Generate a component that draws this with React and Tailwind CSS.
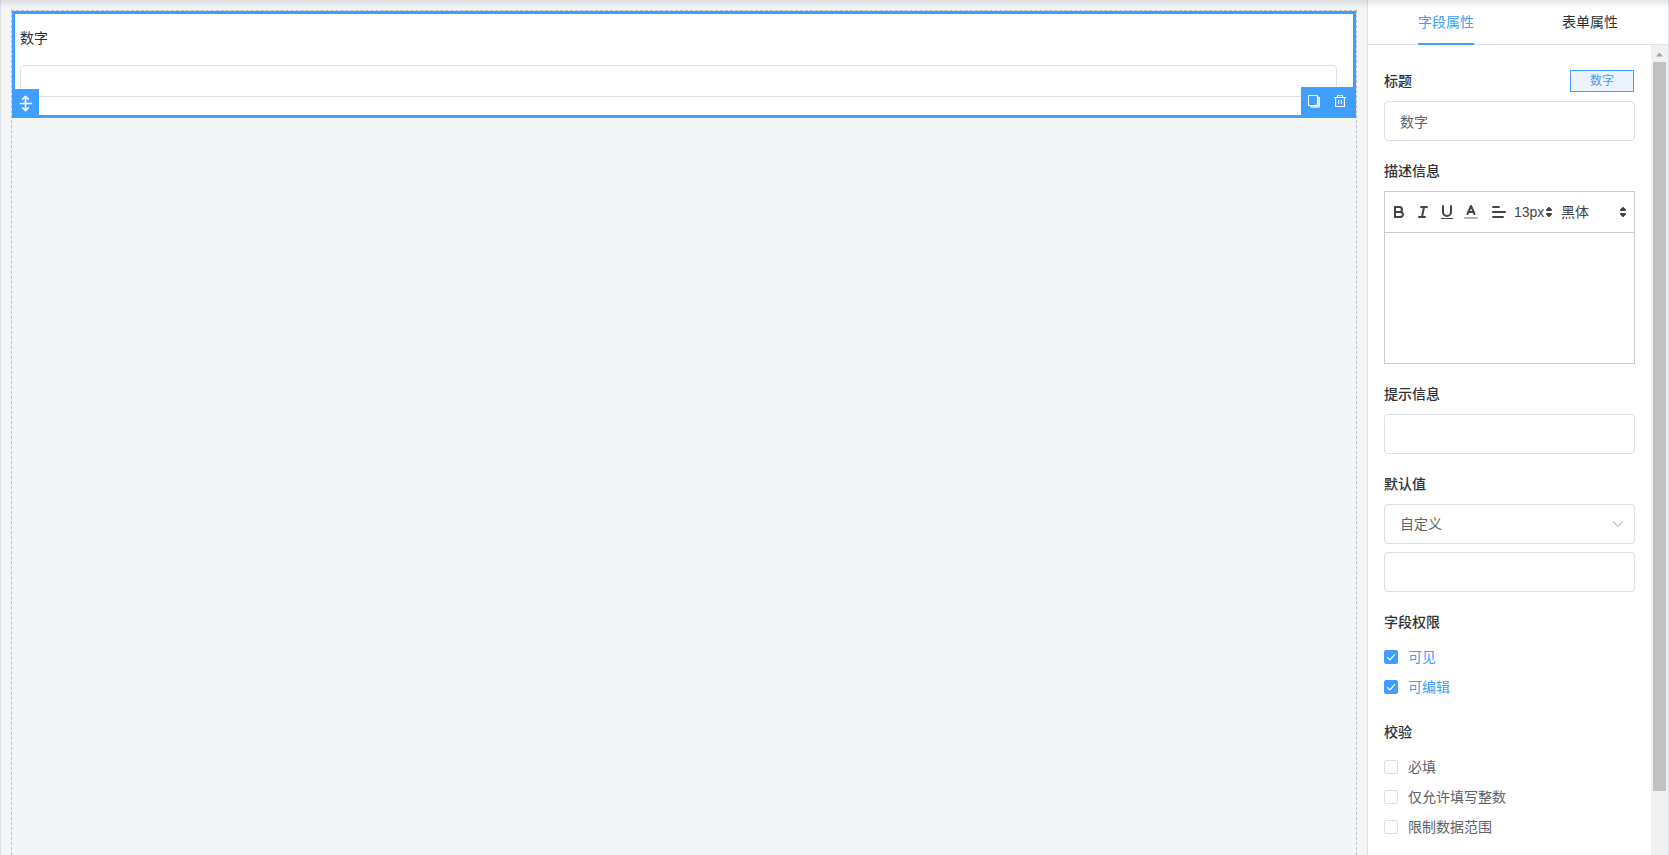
import { useState } from "react";

function Svg({ size = 18, box = 18, className = "", children }) {
  return (
    <svg
      width={size}
      height={size}
      viewBox={`0 0 ${box} ${box}`}
      fill="none"
      stroke="currentColor"
      aria-hidden="true"
      className={className}
    >
      {children}
    </svg>
  );
}

const BoldIcon = () => (
  <Svg>
    <g strokeWidth="2" strokeLinejoin="round">
      <path d="M5,4H9.5A2.5,2.5,0,0,1,12,6.5v0A2.5,2.5,0,0,1,9.5,9H5V4Z" />
      <path d="M5,9h5.5A2.5,2.5,0,0,1,13,11.5v0A2.5,2.5,0,0,1,10.5,14H5V9Z" />
    </g>
  </Svg>
);

const ItalicIcon = () => (
  <Svg>
    <g strokeWidth="2" strokeLinecap="round">
      <line x1="7" x2="13" y1="4" y2="4" />
      <line x1="5" x2="11" y1="14" y2="14" />
      <line x1="8" x2="10" y1="14" y2="4" />
    </g>
  </Svg>
);

const UnderlineIcon = () => (
  <Svg>
    <path
      strokeWidth="2"
      strokeLinecap="round"
      d="M5,3V9a4.012,4.012,0,0,0,4,4H9a4.012,4.012,0,0,0,4-4V3"
    />
    <rect x="3" y="15" width="12" height="1" fill="currentColor" stroke="none" />
  </Svg>
);

const ColorIcon = () => (
  <Svg>
    <line x1="3" x2="15" y1="15" y2="15" strokeWidth="2" strokeLinecap="round" opacity="0.4" />
    <g strokeWidth="2" strokeLinecap="round" strokeLinejoin="round">
      <polyline points="5.5 11 9 3 12.5 11" />
      <line x1="11.63" x2="6.38" y1="9" y2="9" />
    </g>
  </Svg>
);

const AlignIcon = () => (
  <Svg>
    <g strokeWidth="2" strokeLinecap="round">
      <line x1="3" x2="15" y1="9" y2="9" />
      <line x1="3" x2="13" y1="14" y2="14" />
      <line x1="3" x2="9" y1="4" y2="4" />
    </g>
  </Svg>
);

const PickerArrows = () => (
  <Svg className="pointer-events-none absolute right-0 top-1">
    <g strokeWidth="2" strokeLinecap="round" strokeLinejoin="round" fill="currentColor">
      <polygon points="7 11 9 13 11 11 7 11" />
      <polygon points="7 7 9 5 11 7 7 7" />
    </g>
  </Svg>
);

function ToolButton({ label, children }) {
  return (
    <button type="button" aria-label={label} className="flex size-6 items-center justify-center">
      {children}
    </button>
  );
}

function Picker({ label, options, className }) {
  return (
    <div className={`relative h-[26px] ${className}`}>
      <select
        aria-label={label}
        className="h-full w-full appearance-none bg-transparent p-0 text-sm outline-none"
      >
        {options.map((o) => (
          <option key={o}>{o}</option>
        ))}
      </select>
      <PickerArrows />
    </div>
  );
}

const titleClass = "text-sm leading-5 font-medium text-[#303133]";

function Section({ title, htmlFor, extra, children }) {
  return (
    <section className="flex flex-col gap-2.5">
      <div className="flex h-5 items-center justify-between">
        {htmlFor ? (
          <label htmlFor={htmlFor} className={titleClass}>
            {title}
          </label>
        ) : (
          <h3 className={titleClass}>{title}</h3>
        )}
        {extra}
      </div>
      {children}
    </section>
  );
}

const inputClass =
  "h-10 w-full rounded border border-[#dcdfe6] bg-white px-[15px] text-sm text-[#606266] outline-none";

function Check({ label, initial = false }) {
  const [on, setOn] = useState(initial);
  return (
    <label className="flex h-[30px] items-center gap-2.5 text-sm text-[#606266] has-checked:text-[#409eff]">
      <span className="grid size-3.5 shrink-0 place-items-center">
        <input
          type="checkbox"
          checked={on}
          onChange={() => setOn(!on)}
          className="col-start-1 row-start-1 size-3.5 appearance-none rounded-xs border border-[#dcdfe6] bg-white checked:border-[#409eff] checked:bg-[#409eff]"
        />
        {on && (
          <Svg size={14} box={14} className="pointer-events-none col-start-1 row-start-1 text-white">
            <path d="M3.2 7.3 L5.9 9.9 L10.9 4.4" strokeWidth="1.2" />
          </Svg>
        )}
      </span>
      {label}
    </label>
  );
}

function Canvas() {
  return (
    <main className="flex min-w-0 flex-1 flex-col border-l border-[#dcdfe6] bg-[#f3f5f7] px-2.5 pt-2.5">
      <div className="flex-1 border border-b-0 border-dashed border-[#bbbfc6]">
        <div className="relative h-[107px] border-[3px] border-[#409eff] bg-white pt-3.5 pr-4 pl-[5px]">
          <label htmlFor="number-field" className="block text-sm leading-5 text-[#303133]">
            数字
          </label>
          <input
            id="number-field"
            type="text"
            className="mt-[17px] block h-8 w-full rounded border border-[#dcdfe6] bg-white px-[15px] text-sm outline-none"
          />
          <button
            type="button"
            aria-label="移动"
            className="absolute -bottom-[3px] -left-[3px] flex h-[29px] w-[27px] items-center justify-center bg-[#409eff] text-white"
          >
            <Svg size={17} box={17}>
              <path
                d="M2.5 8.5H15M8.5 1.5V15.5M5.2 4.6L8.5 1.3L11.8 4.6M5.2 12.4L8.5 15.7L11.8 12.4"
                strokeWidth="1.6"
              />
            </Svg>
          </button>
          <div className="absolute -right-[3px] -bottom-[3px] flex h-[31px] w-[55px] gap-3 bg-[#409eff] pt-[7px] pl-1.5 text-white">
            <button type="button" aria-label="复制" className="size-3.5">
              <Svg size={14} box={14}>
                <rect x="1.5" y="1.5" width="9" height="10" rx="0.5" strokeWidth="1.1" />
                <path d="M12.5 3V13.2H3.5M11.6 2.6V12.3H3" strokeWidth="0.9" />
              </Svg>
            </button>
            <button type="button" aria-label="删除" className="size-3.5">
              <Svg size={14} box={14}>
                <path
                  d="M1 3.5H13M4.5 3.3V1.5H9.5V3.3M2.6 3.5V12.5H11.4V3.5M5.6 6V10M8.4 6V10"
                  strokeWidth="1.1"
                  strokeLinejoin="round"
                />
              </Svg>
            </button>
          </div>
        </div>
      </div>
    </main>
  );
}

function Scrollbar() {
  return (
    <div aria-hidden="true" className="flex w-[17px] shrink-0 flex-col items-center bg-[#f1f1f1]">
      <div className="flex h-[17px] items-center">
        <Svg size={7} box={7} className="mt-0.5">
          <path d="M0 5.5H7L3.5 1.5Z" fill="#a3a3a3" stroke="none" />
        </Svg>
      </div>
      <div className="h-[90%] w-[13px] bg-[#c1c1c1]" />
    </div>
  );
}

function Tab({ active, onClick, children }) {
  return (
    <button
      type="button"
      role="tab"
      aria-selected={active}
      onClick={onClick}
      className="group flex h-full flex-1 justify-center text-sm text-[#303133] aria-selected:text-[#409eff]"
    >
      <span className="-mb-px flex h-[45px] items-center border-b-2 border-transparent group-aria-selected:border-[#409eff]">
        {children}
      </span>
    </button>
  );
}

function Properties() {
  const [tab, setTab] = useState(0);
  return (
    <aside className="flex w-[302px] shrink-0 flex-col border-x border-[#dcdfe6] bg-white">
      <div role="tablist" className="flex h-[45px] shrink-0 border-b border-[#dfe2e9] px-1.5">
        {["字段属性", "表单属性"].map((name, i) => (
          <Tab key={name} active={tab === i} onClick={() => setTab(i)}>
            {name}
          </Tab>
        ))}
      </div>
      <div className="flex min-h-0 flex-1">
        <div className="flex min-w-0 flex-1 flex-col gap-5 overflow-hidden px-4 pt-[26px]">
          <Section
            title="标题"
            htmlFor="title"
            extra={
              <span className="mr-px flex h-[22px] w-16 items-center justify-center border border-[#409eff] bg-[#ecf2fe] text-xs text-[#409eff]">
                数字
              </span>
            }
          >
            <input id="title" type="text" defaultValue="数字" className={inputClass} />
          </Section>

          <Section title="描述信息" htmlFor="description">
            <div className="border border-[#ccc] text-[#444]">
              <div className="flex h-[41px] items-center border-b border-[#ccc] px-0.5">
                <ToolButton label="加粗"><BoldIcon /></ToolButton>
                <ToolButton label="斜体"><ItalicIcon /></ToolButton>
                <ToolButton label="下划线"><UnderlineIcon /></ToolButton>
                <ToolButton label="文字颜色"><ColorIcon /></ToolButton>
                <div className="flex flex-1 items-center gap-[3px] pl-1">
                  <ToolButton label="对齐"><AlignIcon /></ToolButton>
                  <Picker label="字号" options={["13px", "14px", "16px"]} className="w-11" />
                  <Picker label="字体" options={["黑体", "宋体"]} className="flex-1" />
                </div>
              </div>
              <textarea id="description" className="block h-[130px] w-full resize-none p-3 text-sm outline-none" />
            </div>
          </Section>

          <Section title="提示信息" htmlFor="hint">
            <input id="hint" type="text" className={inputClass} />
          </Section>

          <Section title="默认值" htmlFor="default-kind">
            <div className="flex flex-col gap-2">
              <div className="relative">
                <select id="default-kind" className={`${inputClass} appearance-none`}>
                  <option>自定义</option>
                </select>
                <Svg size={14} box={14} className="pointer-events-none absolute top-[13px] right-2.5 text-[#c0c4cc]">
                  <path d="M2 4.5L7 9.5L12 4.5" strokeWidth="1.1" />
                </Svg>
              </div>
              <input type="text" aria-label="默认值内容" className={inputClass} />
            </div>
          </Section>

          <Section title="字段权限">
            <div>
              <Check label="可见" initial />
              <Check label="可编辑" initial />
            </div>
          </Section>

          <Section title="校验">
            <div>
              <Check label="必填" />
              <Check label="仅允许填写整数" />
              <Check label="限制数据范围" />
            </div>
          </Section>
        </div>
        <Scrollbar />
      </div>
    </aside>
  );
}

export default function App() {
  return (
    <div className="relative flex h-screen overflow-hidden font-['Liberation_Sans','Noto_Sans_CJK_SC',sans-serif]">
      <Canvas />
      <Properties />
      <div className="pointer-events-none absolute inset-x-0 top-0 h-2 bg-linear-to-b from-black/10 to-transparent" />
    </div>
  );
}
